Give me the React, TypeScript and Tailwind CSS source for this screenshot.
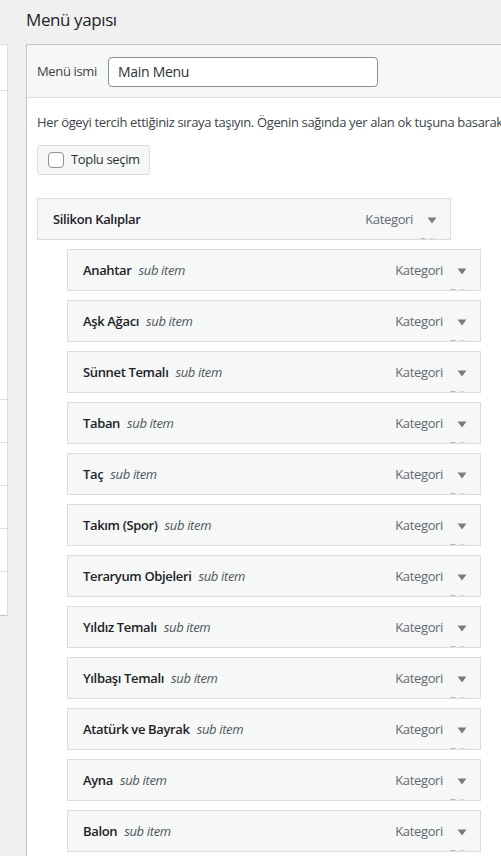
import React from "react";

const SUB_ITEMS = [
  "Anahtar",
  "Aşk Ağacı",
  "Sünnet Temalı",
  "Taban",
  "Taç",
  "Takım (Spor)",
  "Teraryum Objeleri",
  "Yıldız Temalı",
  "Yılbaşı Temalı",
  "Atatürk ve Bayrak",
  "Ayna",
  "Balon",
];

function Arrow() {
  return (
    <svg width="10" height="7" viewBox="0 0 10 7" className="shrink-0">
      <path d="M0.5 0.5 L9.5 0.5 L5 6.5 Z" fill="#787c82" />
    </svg>
  );
}

function MenuItem({ title, sub }: { title: string; sub?: boolean }) {
  return (
    <div className="relative h-[42px] w-[414px] overflow-hidden border border-[#dcdcde] bg-[#f6f7f7] flex items-center pl-[15px] pr-[13px] pt-[2px]">
      <span className="font-semibold text-[#1d2327]">{title}</span>
      {sub && <span className="ml-[7px] italic text-[#50575e]">sub item</span>}
      <span className="ml-auto text-[#646970]">Kategori</span>
      <span className="ml-[14px]">
        <Arrow />
      </span>
      <span className="absolute top-[37px] right-[12px] text-[11px] leading-[12px] text-[#a7aaad]">
        Edit
      </span>
    </div>
  );
}

export default function App() {
  return (
    <div
      className="w-[501px] h-[856px] overflow-hidden bg-[#f0f0f1] flex text-[13px] tracking-[-0.35px] text-[#3c434a]"
      style={{ fontFamily: '"Open Sans", "Noto Sans", sans-serif' }}
    >
      {/* Left panel, mostly cut off */}
      <div className="w-[26px] shrink-0 pt-[44px]">
        <div className="w-[8px] bg-white border-t border-r border-[#dcdcde]">
          <div className="h-[46px] border-b border-[#dcdcde]" />
          <div className="h-[309px] border-b border-[#dcdcde]" />
          <div className="h-[43px] border-b border-[#dcdcde]" />
          <div className="h-[43px] border-b border-[#dcdcde]" />
          <div className="h-[43px] border-b border-[#dcdcde]" />
          <div className="h-[43px] border-b border-[#dcdcde]" />
          <div className="h-[44px] border-b border-[#c3c4c7]" />
        </div>
      </div>

      {/* Main column */}
      <div className="flex-1 min-w-0">
        <h2 className="h-[44px] pt-[8px] text-[17px] leading-[24px] tracking-[-0.4px] text-[#1d2327] font-normal">
          Menü yapısı
        </h2>
        <div className="w-[520px] h-[812px] bg-white border-t border-l border-[#c3c4c7]">
          {/* Header */}
          <div className="h-[53px] bg-[#f6f7f7] border-b border-[#dcdcde] flex items-center pl-[10px] pt-[1px]">
            <label className="w-[71px] shrink-0">Menü ismi</label>
            <div className="w-[270px] h-[30px] rounded-[4px] border border-[#8c8f94] bg-white flex items-center px-[9px] text-[14px] tracking-[-0.3px] text-[#2c3338]">
              Main Menu
            </div>
          </div>

          {/* Body */}
          <div className="pl-[10px] pt-[14px]">
            <p className="leading-[20px] whitespace-nowrap">
              Her ögeyi tercih ettiğiniz sıraya taşıyın. Ögenin sağında yer alan ok tuşuna basarak ek ayarları görebilirsiniz.
            </p>
            <div className="mt-[13px] inline-flex items-center h-[30px] w-[113px] rounded-[3px] border border-[#dcdcde] bg-[#f6f7f7] pl-[10px] text-[#2c3338]">
              <span className="w-[16px] h-[16px] rounded-[4px] border border-[#8c8f94] bg-white shrink-0" />
              <span className="ml-[7px]">Toplu seçim</span>
            </div>

            <div className="mt-[23px] flex flex-col gap-[9px]">
              <MenuItem title="Silikon Kalıplar" />
              {SUB_ITEMS.map((t) => (
                <div key={t} className="pl-[30px]">
                  <MenuItem title={t} sub />
                </div>
              ))}
            </div>
          </div>
        </div>
      </div>
    </div>
  );
}
